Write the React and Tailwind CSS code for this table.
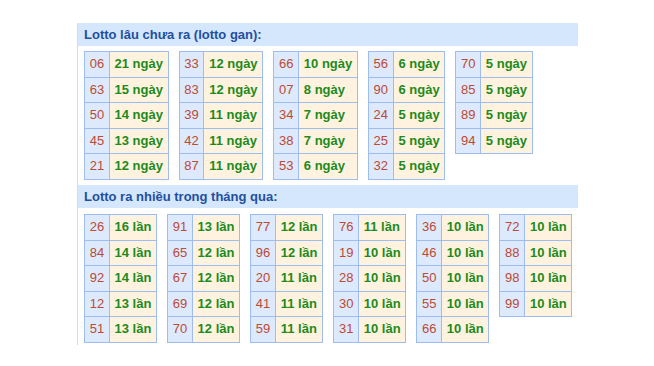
import React from 'react'

const ganData = [
  [['06', '21 ngày'], ['63', '15 ngày'], ['50', '14 ngày'], ['45', '13 ngày'], ['21', '12 ngày']],
  [['33', '12 ngày'], ['83', '12 ngày'], ['39', '11 ngày'], ['42', '11 ngày'], ['87', '11 ngày']],
  [['66', '10 ngày'], ['07', '8 ngày'], ['34', '7 ngày'], ['38', '7 ngày'], ['53', '6 ngày']],
  [['56', '6 ngày'], ['90', '6 ngày'], ['24', '5 ngày'], ['25', '5 ngày'], ['32', '5 ngày']],
  [['70', '5 ngày'], ['85', '5 ngày'], ['89', '5 ngày'], ['94', '5 ngày']],
]

const nhieuData = [
  [['26', '16 lần'], ['84', '14 lần'], ['92', '14 lần'], ['12', '13 lần'], ['51', '13 lần']],
  [['91', '13 lần'], ['65', '12 lần'], ['67', '12 lần'], ['69', '12 lần'], ['70', '12 lần']],
  [['77', '12 lần'], ['96', '12 lần'], ['20', '11 lần'], ['41', '11 lần'], ['59', '11 lần']],
  [['76', '11 lần'], ['19', '10 lần'], ['28', '10 lần'], ['30', '10 lần'], ['31', '10 lần']],
  [['36', '10 lần'], ['46', '10 lần'], ['50', '10 lần'], ['55', '10 lần'], ['66', '10 lần']],
  [['72', '10 lần'], ['88', '10 lần'], ['98', '10 lần'], ['99', '10 lần']],
]

const LottoTable = ({ rows }) => (
  <div className="grid grid-cols-[auto_auto] self-start shrink-0 border-l border-t border-[#9dbcf0]">
    {rows.map(([num, count]) => (
      <React.Fragment key={num}>
        <div className="px-[4.7px] py-[5px] leading-[14.6px] whitespace-nowrap bg-[#dde9fc] text-[#bc4a34] border-r border-b border-[#9dbcf0]">
          {num}
        </div>
        <div className="px-[4.7px] py-[5px] leading-[14.6px] whitespace-nowrap bg-[#fff3df] text-[#1d8a1d] font-bold border-r border-b border-[#9dbcf0]">
          {count}
        </div>
      </React.Fragment>
    ))}
  </div>
)

const SectionHeader = ({ children }) => (
  <div className="h-[23px] pl-[6px] flex items-center bg-[#d5e7fc] text-[#1f4f9f] font-bold text-[13px] whitespace-nowrap">
    {children}
  </div>
)

export default function App() {
  return (
    <div className="w-[654px] h-[366px] bg-white font-['Liberation_Sans',Arial,sans-serif] text-[13px]">
      <div className="pt-[23px] pl-[77px]">
        <div className="w-[501px] border-l border-[#dadada] pb-[2px]">
          <SectionHeader>Lotto lâu chưa ra (lotto gan):</SectionHeader>
          <div className="flex gap-[10px] pl-[6px] pt-[5px]">
            {ganData.map((rows, i) => (
              <LottoTable key={i} rows={rows} />
            ))}
          </div>
          <div className="mt-[5px]">
            <SectionHeader>Lotto ra nhiều trong tháng qua:</SectionHeader>
          </div>
          <div className="flex gap-[10px] pl-[6px] pt-[6px]">
            {nhieuData.map((rows, i) => (
              <LottoTable key={i} rows={rows} />
            ))}
          </div>
        </div>
      </div>
    </div>
  )
}
